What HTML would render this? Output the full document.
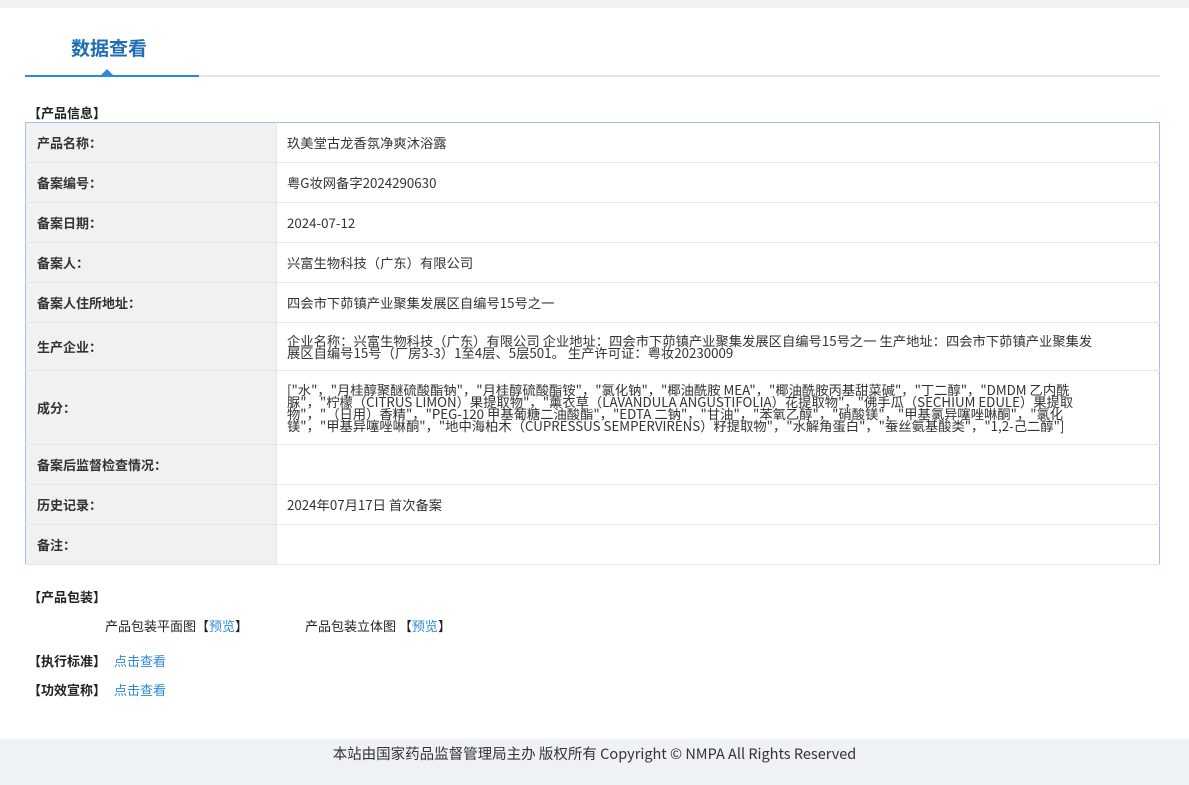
<!DOCTYPE html>
<html><head><meta charset="utf-8"><style>
body{margin:0;width:1189px;height:785px;background:#fff;font-family:"Noto Sans CJK SC","Liberation Sans",sans-serif;font-size:13px;color:#333;position:relative;overflow:hidden}
.a{position:absolute;white-space:nowrap;line-height:16px}
.topbar{position:absolute;left:0;top:0;width:1189px;height:8px;background:#eff2f5}
.title{left:71px;top:36px;font-size:19px;font-weight:bold;color:#1e6db5;line-height:24px}
.line{position:absolute;left:25px;top:75px;width:1135px;height:2px;background:#e6e6e6}
.line2{position:absolute;left:25px;top:75px;width:174px;height:2px;background:#2b8bd8}
.tri{position:absolute;left:100px;top:69px;width:0;height:0;border-left:7px solid transparent;border-right:7px solid transparent;border-bottom:7px solid #2b8bd8}
.b{font-weight:bold;color:#222}
table{position:absolute;left:25px;top:122px;width:1135px;border-collapse:collapse;border:1px solid #9ec0ea}
td{border-bottom:1px solid #e6e6e6;padding:0;font-size:13px}
td.l{width:239px;background:#f1f1f1;font-weight:bold;color:#333;padding-left:11px;border-right:1px solid #e6e6e6}
td.r{padding-left:10px;color:#333;line-height:12px;font-size:13.3px}
.blue{color:#2b8bd8}
.lk{margin-left:5px}
.foot{position:absolute;left:0;top:739px;width:1189px;height:46px;background:#eff2f5;text-align:center;line-height:30px;font-size:14.5px;color:#333}
</style></head><body>
<div class="topbar"></div>
<div class="a title">数据查看</div>
<div class="line"></div><div class="line2"></div><div class="tri"></div>
<div class="a b" style="left:28px;top:105px">【产品信息】</div>
<table>
<tr style="height:40px"><td class="l">产品名称：</td><td class="r">玖美堂古龙香氛净爽沐浴露</td></tr>
<tr style="height:40px"><td class="l">备案编号：</td><td class="r">粤G妆网备字2024290630</td></tr>
<tr style="height:40px"><td class="l">备案日期：</td><td class="r">2024-07-12</td></tr>
<tr style="height:40px"><td class="l">备案人：</td><td class="r">兴富生物科技（广东）有限公司</td></tr>
<tr style="height:40px"><td class="l">备案人住所地址：</td><td class="r">四会市下茆镇产业聚集发展区自编号15号之一</td></tr>
<tr style="height:48px"><td class="l">生产企业：</td><td class="r" style="white-space:nowrap">企业名称：兴富生物科技（广东）有限公司 企业地址：四会市下茆镇产业聚集发展区自编号15号之一 生产地址：四会市下茆镇产业聚集发<br>展区自编号15号（厂房3-3）1至4层、5层501。 生产许可证：粤妆20230009</td></tr>
<tr style="height:74px"><td class="l">成分：</td><td class="r" style="white-space:nowrap">["水"，"月桂醇聚醚硫酸酯钠"，"月桂醇硫酸酯铵"，"氯化钠"，"椰油酰胺 MEA"，"椰油酰胺丙基甜菜碱"，"丁二醇"，"DMDM 乙内酰<br>脲"，"柠檬（CITRUS LIMON）果提取物"，"薰衣草（LAVANDULA ANGUSTIFOLIA）花提取物"，"佛手瓜（SECHIUM EDULE）果提取<br>物"，"（日用）香精"，"PEG-120 甲基葡糖二油酸酯"，"EDTA 二钠"，"甘油"，"苯氧乙醇"，"硝酸镁"，"甲基氯异噻唑啉酮"，"氯化<br>镁"，"甲基异噻唑啉酮"，"地中海柏木（CUPRESSUS SEMPERVIRENS）籽提取物"，"水解角蛋白"，"蚕丝氨基酸类"，"1,2-己二醇"]</td></tr>
<tr style="height:40px"><td class="l">备案后监督检查情况：</td><td class="r"></td></tr>
<tr style="height:40px"><td class="l">历史记录：</td><td class="r">2024年07月17日 首次备案</td></tr>
<tr style="height:40px"><td class="l">备注：</td><td class="r"></td></tr>
</table>
<div class="a b" style="left:28px;top:589px">【产品包装】</div>
<div class="a" style="left:105px;top:618px;color:#222">产品包装平面图【<span class="blue">预览</span>】</div>
<div class="a" style="left:305px;top:618px;color:#222">产品包装立体图 【<span class="blue">预览</span>】</div>
<div class="a" style="left:28px;top:653px"><span class="b">【执行标准】</span> <span class="blue lk">点击查看</span></div>
<div class="a" style="left:28px;top:682px"><span class="b">【功效宣称】</span> <span class="blue lk">点击查看</span></div>
<div class="foot">本站由国家药品监督管理局主办 版权所有 Copyright © NMPA All Rights Reserved</div>
</body></html>
